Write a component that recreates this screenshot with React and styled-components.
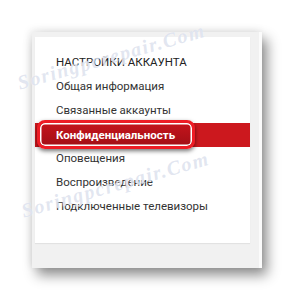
import React from 'react';
import styled, { createGlobalStyle } from 'styled-components';

const GlobalStyle = createGlobalStyle`
  html, body {
    margin: 0;
    padding: 0;
    background: #ffffff;
  }
  body {
    font-family: Roboto, "Liberation Sans", Arial, sans-serif;
  }
`;

const Page = styled.div`
  position: relative;
  width: 295px;
  height: 300px;
  overflow: hidden;
  padding: 32px 0 0 32px;
  box-sizing: border-box;
`;

const Frame = styled.div`
  display: flex;
  width: 230px;
  height: 236px;
  background: #f1f1f1;
  box-shadow: 5px 7px 12px rgba(0, 0, 0, 0.45), -2px -2px 8px rgba(0, 0, 0, 0.08);
`;

const Panel = styled.div`
  width: 215px;
  height: 206px;
  margin: 5px 0 0 3px;
  background: #ffffff;
  box-shadow: 0 1px 1px rgba(0, 0, 0, 0.06);
  padding-top: 13px;
  box-sizing: border-box;
  display: flex;
  flex-direction: column;
`;

const Gutter = styled.div`
  flex: 1;
`;

const Edge = styled.div`
  width: 3px;
  background: #fbfbfb;
`;

const Heading = styled.div`
  height: 24px;
  line-height: 24px;
  padding-left: 21px;
  font-size: 11.5px;
  color: #222;
  text-transform: uppercase;
`;

const Item = styled.div`
  position: relative;
  height: 24px;
  line-height: 24px;
  padding-left: 21px;
  font-size: 11.5px;
  color: ${({ active }) => (active ? '#ffffff' : '#333333')};
  background: ${({ active }) => (active ? '#cc181e' : 'transparent')};
  margin-top: ${({ active }) => (active ? '1px' : '0')};
  margin-bottom: ${({ active }) => (active ? '-1px' : '0')};
`;

const Highlight = styled.div`
  position: absolute;
  left: 2px;
  top: -3px;
  width: 158px;
  height: 29px;
  box-sizing: border-box;
  border: 3px solid #ee1c25;
  border-radius: 8px;
  background: linear-gradient(#c5141c, #a20f16);
  box-shadow: inset 0 0 0 1.5px #ffffff, 0 2px 4px rgba(0, 0, 0, 0.55);
  display: flex;
  align-items: center;
  padding-left: 16px;
  font-weight: 700;
  color: #ffffff;
`;

const Watermark = styled.div`
  position: absolute;
  left: ${({ x }) => x}px;
  top: ${({ y }) => y}px;
  transform: rotate(-16deg);
  transform-origin: left center;
  font-family: "Liberation Serif", serif;
  font-style: italic;
  font-weight: 700;
  font-size: 20px;
  letter-spacing: 1.5px;
  color: rgba(185, 195, 220, 0.42);
  text-shadow: 0 0 1px rgba(255, 255, 255, 0.9);
  white-space: nowrap;
  pointer-events: none;
`;

const items = [
  'Общая информация',
  'Связанные аккаунты',
  'Конфиденциальность',
  'Оповещения',
  'Воспроизведение',
  'Подключенные телевизоры',
];

const App = () => (
  <>
    <GlobalStyle />
    <Page>
      <Frame>
        <Panel>
          <Heading>Настройки аккаунта</Heading>
          {items.map((label) =>
            label === 'Конфиденциальность' ? (
              <Item key={label} active>
                <Highlight>{label}</Highlight>
              </Item>
            ) : (
              <Item key={label}>{label}</Item>
            )
          )}
        </Panel>
        <Gutter />
        <Edge />
      </Frame>
      <Watermark x={18} y={72}>Soringpcrepair.Com</Watermark>
      <Watermark x={22} y={200}>Soringpcrepair.Com</Watermark>
    </Page>
  </>
);

export default App;
